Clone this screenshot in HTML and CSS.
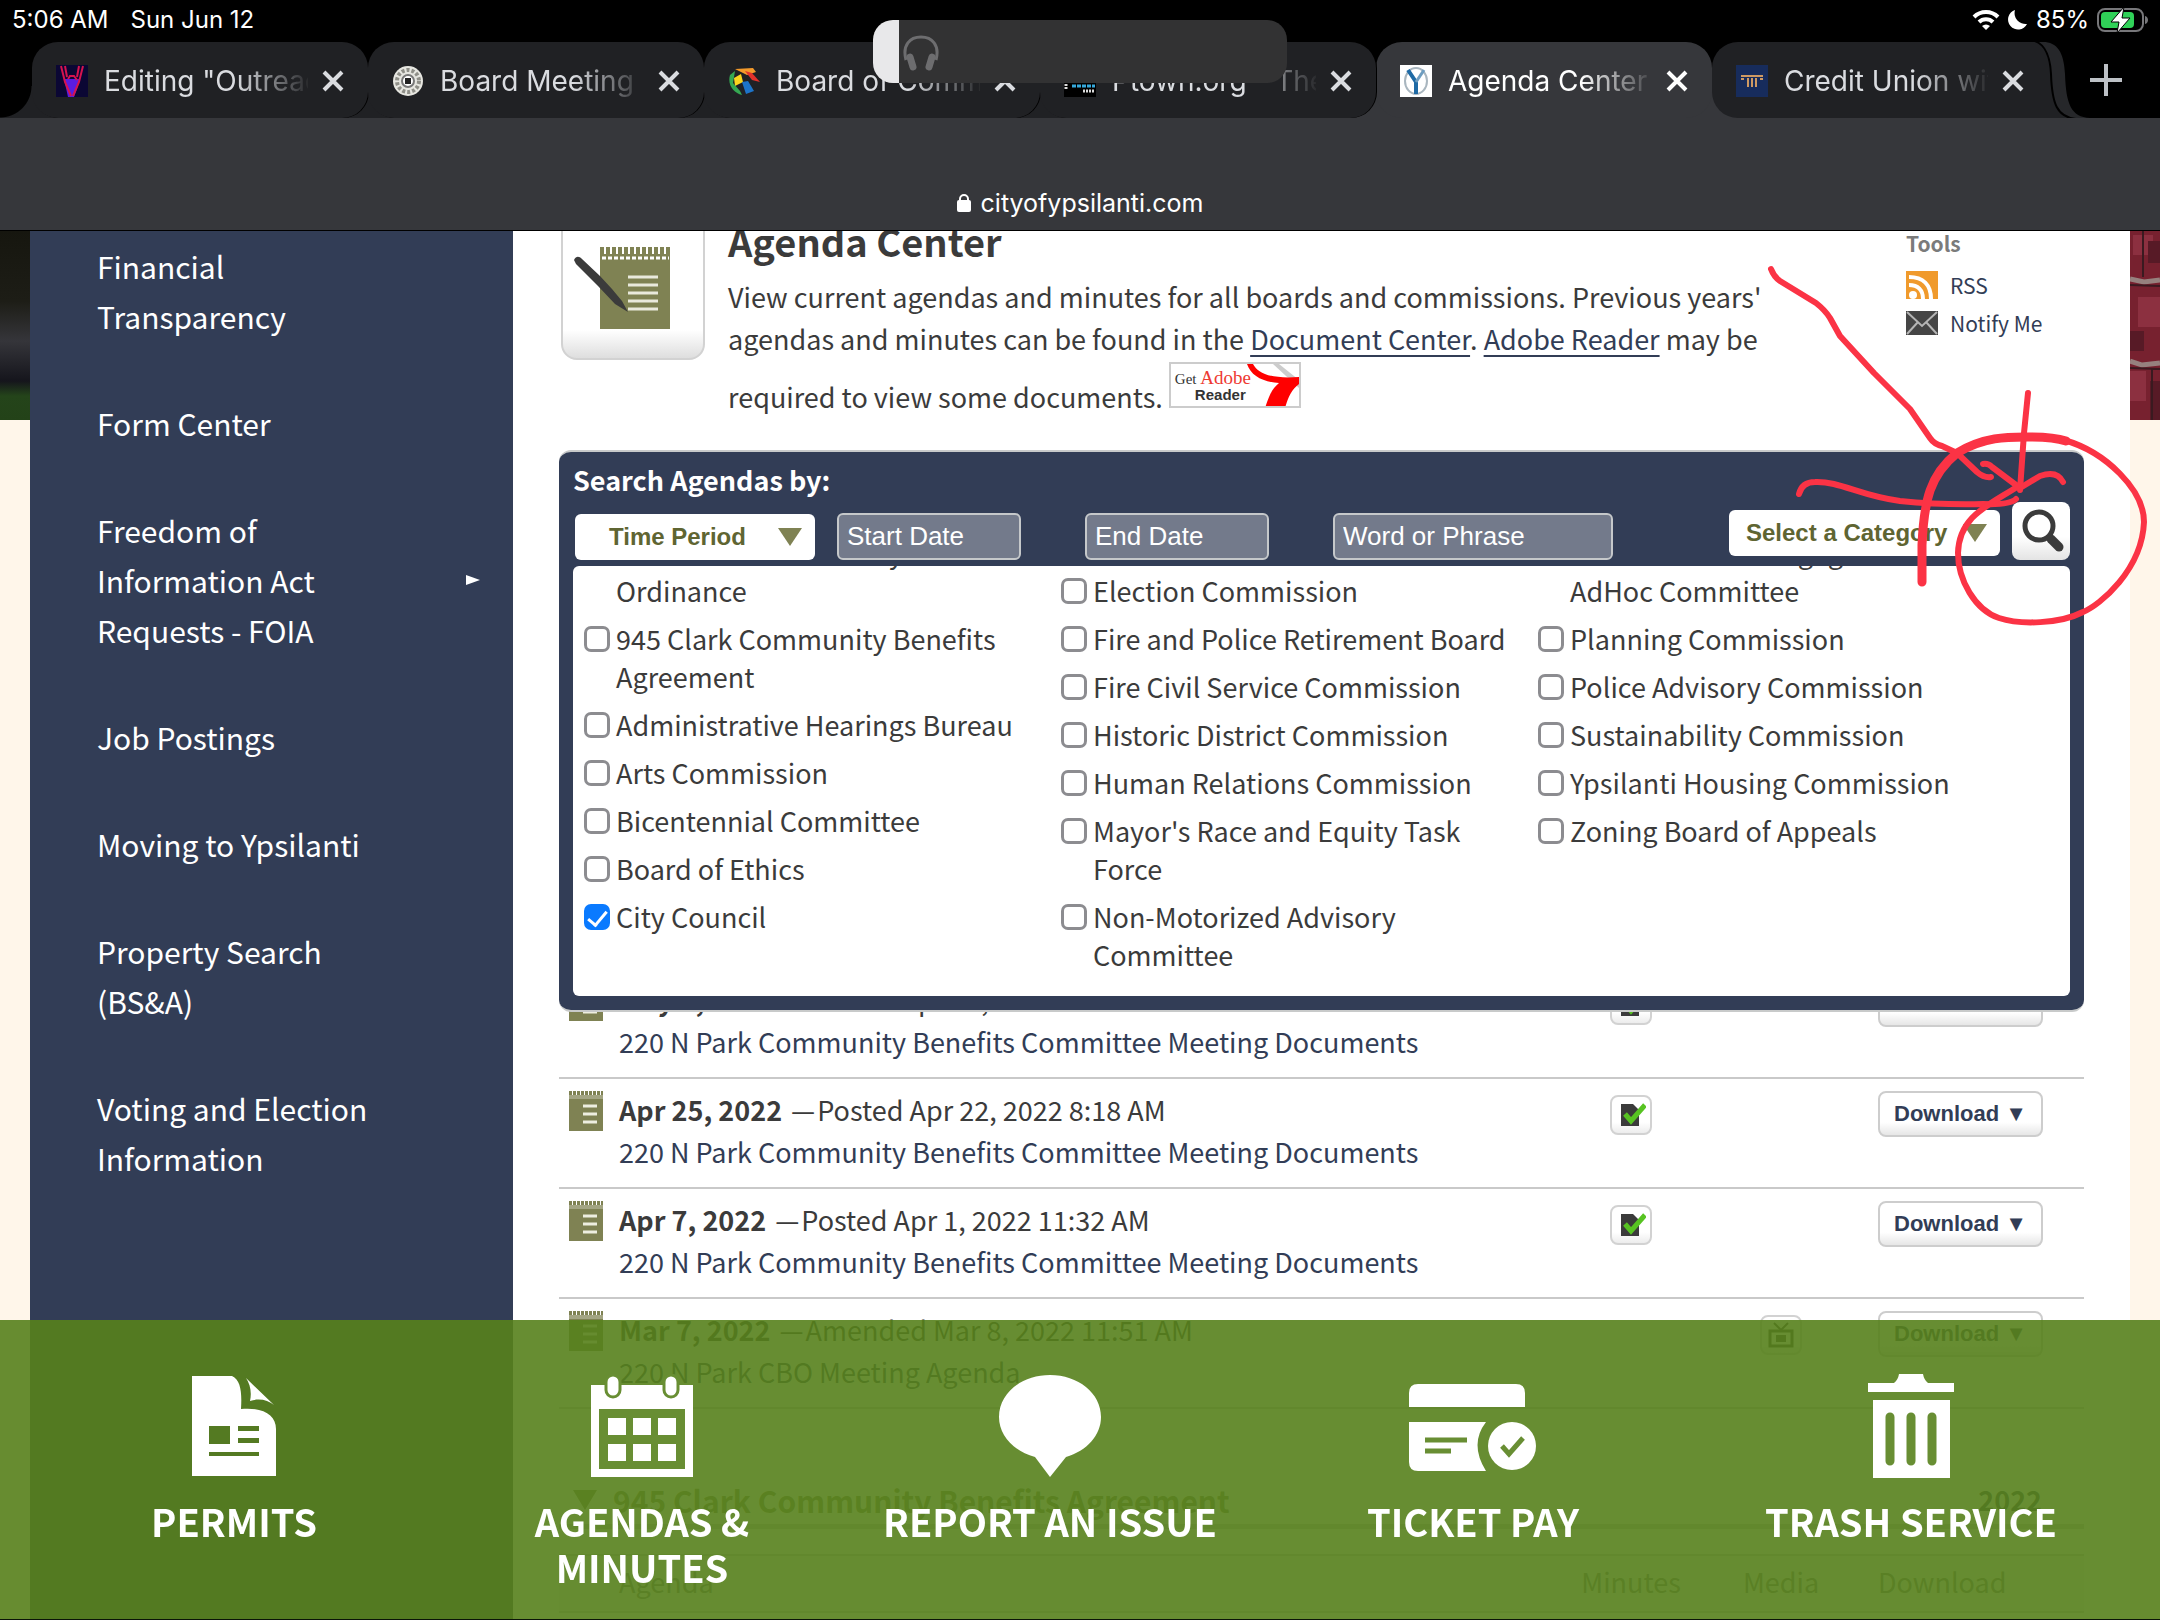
FILE: index.html
```html
<!DOCTYPE html>
<html lang="en">
<head>
    <meta charset="UTF-8">
    <meta name="viewport" content="width=device-width, initial-scale=1.0">
    <title>Agenda Center</title>
    <link rel="stylesheet" href="styles.css">
</head>
<body>
<!-- Shared symbols -->
<svg class="symbols" aria-hidden="true">
    <symbol id="close" viewBox="0 0 22 22"><path d="M2 2l18 18M20 2L2 20" stroke="currentColor" stroke-width="4" fill="none"/></symbol>
    <symbol id="notepad" viewBox="0 0 34 40">
        <path fill="#7f8253" d="M0 4h34v36H0z"/>
        <path stroke="#7f8253" stroke-width="4" stroke-dasharray="3 1" d="M0 2h34"/>
        <path fill="#a3a583" d="M0 4h34v4H0z"/>
        <path stroke="#eeeee0" stroke-width="3" d="M14 15h14M14 23h14M14 31h14"/>
    </symbol>
    <symbol id="minutes" viewBox="0 0 30 26">
        <path fill="#3b3b3b" d="M5 2h12l6 6v16H5z"/>
        <path fill="none" stroke="#57c322" stroke-width="5" d="M9 12l6 7L29 3"/>
    </symbol>
    <symbol id="media" viewBox="0 0 26 26">
        <path fill="none" stroke="#3b3b3b" stroke-width="2" d="M6 1l7 7 7-7"/>
        <path fill="none" stroke="#3b3b3b" stroke-width="3" d="M2 9h22v15H2z"/>
        <path fill="#3b3b3b" d="M8 13h10v7H8z"/>
    </symbol>
</svg>

<header class="browser">
    <div class="status">
        <span>5:06 AM</span>
        <span>Sun Jun 12</span>
        <div class="status-right">
            <svg width="28" height="20" viewBox="0 0 28 20" fill="none" stroke="#fff" stroke-width="4"><path d="M2 7a17 17 0 0 1 24 0M7 12a10 10 0 0 1 14 0"/><path d="M14 20l-4-4a6 6 0 0 1 8 0z" fill="#fff" stroke="none"/></svg>
            <svg width="20" height="20" viewBox="0 0 20 20"><path fill="#fff" d="M7 0a11 11 0 0 0 12 14A10 10 0 1 1 7 0z"/></svg>
            <span>85%</span>
            <svg width="52" height="26" viewBox="0 0 52 26"><rect x="1" y="2" width="45" height="22" rx="7" fill="none" stroke="#77777a" stroke-width="2"/><rect x="4" y="5" width="33" height="16" rx="4" fill="#30d158"/><path d="M48 9c4 1 4 7 0 8z" fill="#77777a"/><path d="M27 0L14 15h8l-2 11 13-15h-8z" fill="#fff" stroke="#000" stroke-width="1"/></svg>
        </div>
    </div>
    <div class="tab-bar">
        <ul class="tabs">
            <li><div class="tab">
                <svg class="favicon" viewBox="0 0 32 32"><path fill="#0b0734" d="M0 0h32v32H0z"/><path fill="#5a1de0" d="M8 14h16l-3 10-3 8h-6z"/><path fill="none" stroke="#d6134f" stroke-width="2" d="M5 1l4 16 6 14M9 1l2 11M27 1l-4 16-6 14M23 1l-2 11M12 14l2-3 4 0 3 4"/></svg>
                <span class="tab-title">Editing "Outreach"</span>
                <button type="button" aria-label="Close tab"><svg><use href="#close"/></svg></button>
            </div></li>
            <li><div class="tab">
                <svg class="favicon" viewBox="0 0 32 32"><circle cx="16" cy="16" r="15" fill="#e6e6e0"/><circle cx="16" cy="16" r="11" fill="none" stroke="#8f8f88" stroke-width="4" stroke-dasharray="3 2"/><circle cx="16" cy="16" r="6" fill="#fff" stroke="#777" stroke-width="2"/><path fill="#222" d="M13 13h6v6h-6z"/></svg>
                <span class="tab-title">Board Meeting</span>
                <button type="button" aria-label="Close tab"><svg><use href="#close"/></svg></button>
            </div></li>
            <li><div class="tab">
                <svg class="favicon" viewBox="0 0 32 32"><path fill="#f39a2b" d="M7 4l18-1 3 4-9 3z"/><path fill="#e2322b" d="M17 6l7 2 8 9-8-2z"/><path fill="#fbd51e" d="M6 13l7-4 2 8-8 4z"/><path fill="#35a852" d="M2 10l5-4-2 12 7 8 2 4C6 28-1 20 2 10z"/><path fill="#1d74c9" d="M14 17l6-1 6 10-8 3z"/></svg>
                <span class="tab-title">Board of Commissioners</span>
                <button type="button" aria-label="Close tab"><svg><use href="#close"/></svg></button>
            </div></li>
            <li><div class="tab">
                <svg class="favicon" viewBox="0 0 32 32"><path d="M0 0h32v32H0z"/><path stroke="#36a9dc" stroke-width="3" stroke-dasharray="4 1" d="M8 21h23"/><path stroke="#ddd" stroke-width="3" stroke-dasharray="2 1" d="M19 26h12M2 16v9"/></svg>
                <span class="tab-title">Ptown.org - The Home</span>
                <button type="button" aria-label="Close tab"><svg><use href="#close"/></svg></button>
            </div></li>
            <li class="active"><div class="tab">
                <svg class="favicon" viewBox="0 0 32 32"><path fill="#fff" d="M0 0h32v32H0z"/><ellipse cx="16" cy="16" rx="11" ry="13" fill="none" stroke="#a9b6bf" stroke-width="2"/><path fill="none" stroke="#1f6aa5" stroke-width="4" d="M8 5l8 12v12"/><path stroke="#6e9dc0" stroke-width="3" d="M24 5l-8 12"/></svg>
                <span class="tab-title">Agenda Center</span>
                <button type="button" aria-label="Close tab"><svg><use href="#close"/></svg></button>
            </div></li>
            <li><div class="tab">
                <svg class="favicon" viewBox="0 0 32 32"><path fill="#172c5c" d="M0 0h32v32H0z"/><path fill="none" stroke="#cf9a63" stroke-width="2" d="M5 11h22M12 13v9M16 13v9M20 13v9M5 14h3M24 14h3"/></svg>
                <span class="tab-title">Credit Union with</span>
                <button type="button" aria-label="Close tab"><svg><use href="#close"/></svg></button>
            </div></li>
        </ul>
        <div class="new-tab">
            <svg class="tab-edge" width="100" height="76" viewBox="0 0 100 76"><path fill="#26272a" d="M0 0h53c14 0 21 10 22 32 1 30 6 43 25 44H0z"/><path fill="#202124" stroke="#000" stroke-width="2" d="M0-2h38c14 0 22 12 23 34 1 30 6 43 25 45H0z"/></svg>
            <button type="button" aria-label="New tab"><svg width="32" height="32" viewBox="0 0 32 32"><path stroke="#bdc1c6" stroke-width="4" d="M16 0v32M0 16h32"/></svg></button>
        </div>
    </div>
    <div class="address">
        <svg width="14" height="18" viewBox="0 0 14 18"><rect y="6" width="14" height="12" rx="2" fill="#fff"/><path d="M3 8V5a4 4 0 0 1 8 0v3" fill="none" stroke="#fff" stroke-width="2"/></svg>
        <span>cityofypsilanti.com</span>
    </div>
    <!-- Volume overlay -->
    <div class="volume">
        <svg width="36" height="36" viewBox="0 0 36 36" fill="none" stroke="#6d6d6f" stroke-width="3"><path d="M3 25C-1 10 7 2 18 2s19 8 15 23"/><path d="M7 22l3 10M29 22l-3 10" stroke-width="7" stroke-linecap="round"/></svg>
    </div>
</header>

<div class="page">
    <div class="banner">
        <div class="banner-left"></div>
        <svg class="banner-right" viewBox="0 0 30 189" preserveAspectRatio="none">
            <path fill="#77212f" d="M0 0h30v189H0z"/>
            <path fill="#8c3040" d="M3 4h20v20H3zM8 66h22v30H8zM0 140h16v30H0z"/>
            <path fill="#571a26" d="M18 10h12v22H18zM0 100h14v20H0zM20 150h10v39H20z"/>
            <path fill="none" stroke="#96817e" stroke-width="5" d="M0 48l14 3 16-2M0 130l12 4 18-2"/>
            <path fill="none" stroke="#3a1a20" stroke-width="2" d="M0 54l30 1M0 137l30 1M22 137v52M13 0v46"/>
        </svg>
    </div>

    <nav class="sidebar">
        <ul>
            <li><a href="#">Financial Transparency</a></li>
            <li><a href="#">Form Center</a></li>
            <li><a href="#">Freedom of Information Act Requests - FOIA</a><span class="more"></span></li>
            <li><a href="#">Job Postings</a></li>
            <li><a href="#">Moving to Ypsilanti</a></li>
            <li><a href="#">Property Search (BS&amp;A)</a></li>
            <li><a href="#">Voting and Election Information</a></li>
        </ul>
    </nav>

    <main>
        <section class="intro">
            <div class="intro-icon">
                <svg width="100" height="84" viewBox="0 0 100 84">
                    <path fill="#7f8253" d="M28 8h70v75H28z"/>
                    <path stroke="#7f8253" stroke-width="8" stroke-dasharray="4 2" d="M28 5h70"/>
                    <path stroke="#fff" stroke-width="3" stroke-dasharray="4 2" d="M30 12h67"/>
                    <path stroke="#e9e9dc" stroke-width="3" d="M56 31h30M56 39h30M56 47h30M56 55h30M56 63h30"/>
                    <path fill="#3b3b3b" d="M2 14c2-4 5-4 8-1l18 17 12 13 10 12 6 11-13-8-17-18L4 18z"/>
                </svg>
            </div>
            <div class="intro-text">
                <h1>Agenda Center</h1>
                <p>View current agendas and minutes for all boards and commissions. Previous years' agendas and minutes can be found in the <a href="#">Document Center</a>. <a href="#">Adobe Reader</a> may be required to view some documents. <a class="reader" href="#"><span>Get</span> <b>Adobe</b><strong>Reader</strong><svg width="52" height="44" viewBox="0 0 52 44"><path fill="#ccc" d="M26 0h6l20 16v8z"/><path fill="#f00" d="M18 44c5-15 8-20 14-25C16 18 4 12 0 0h6c5 9 16 15 46 13v7c-8 6-11 14-14 24z"/></svg></a></p>
            </div>
            <aside class="tools">
                <h2>Tools</h2>
                <a href="#"><svg width="32" height="28" viewBox="0 0 32 28"><path fill="#f09a2c" d="M0 0h32v28H0z"/><circle cx="7" cy="24" r="4" fill="#fff"/><path fill="none" stroke="#fff" stroke-width="4" d="M3 14c9 0 14 5 14 14M3 6c14 0 22 8 22 22"/></svg>RSS</a>
                <a href="#"><svg width="32" height="24" viewBox="0 0 32 24"><path fill="#454545" d="M0 0h32v24H0z"/><path fill="none" stroke="#b5b5b5" stroke-width="2" d="M1 1l15 14L31 1M1 23l11-12M31 23L20 11"/></svg>Notify Me</a>
            </aside>
        </section>

        <form class="search">
            <h2>Search Agendas by:</h2>
            <div class="controls">
                <button type="button" class="picker period">Time Period <i></i></button>
                <input type="text" aria-label="Start Date" placeholder="Start Date">
                <input type="text" aria-label="End Date" placeholder="End Date">
                <input type="text" class="phrase" aria-label="Word or Phrase" placeholder="Word or Phrase">
                <button type="button" class="picker category">Select a Category <i></i></button>
                <button type="submit" class="go" aria-label="Search"><svg width="46" height="46" viewBox="0 0 46 46"><circle cx="21" cy="18" r="14" fill="none" stroke="#3b3b3b" stroke-width="5"/><path stroke="#3b3b3b" stroke-width="9" stroke-linecap="round" d="M33 31l8 8"/></svg></button>
            </div>
            <div class="categories">
                <ul>
                    <li class="cut"><label>220 N Park Community Benefits Ordinance</label></li>
                    <li><input type="checkbox" id="c1"><label for="c1">945 Clark Community Benefits Agreement</label></li>
                    <li><input type="checkbox" id="c2"><label for="c2">Administrative Hearings Bureau</label></li>
                    <li><input type="checkbox" id="c3"><label for="c3">Arts Commission</label></li>
                    <li><input type="checkbox" id="c4"><label for="c4">Bicentennial Committee</label></li>
                    <li><input type="checkbox" id="c5"><label for="c5">Board of Ethics</label></li>
                    <li><input type="checkbox" id="c6" checked><label for="c6">City Council</label></li>
                </ul>
                <ul class="second">
                    <li><input type="checkbox" id="c7"><label for="c7">Election Commission</label></li>
                    <li><input type="checkbox" id="c8"><label for="c8">Fire and Police Retirement Board</label></li>
                    <li><input type="checkbox" id="c9"><label for="c9">Fire Civil Service Commission</label></li>
                    <li><input type="checkbox" id="c10"><label for="c10">Historic District Commission</label></li>
                    <li><input type="checkbox" id="c11"><label for="c11">Human Relations Commission</label></li>
                    <li><input type="checkbox" id="c12"><label for="c12">Mayor's Race and Equity Task Force</label></li>
                    <li><input type="checkbox" id="c13"><label for="c13">Non-Motorized Advisory Committee</label></li>
                </ul>
                <ul>
                    <li class="cut"><label>Parks and Civic Engagement AdHoc Committee</label></li>
                    <li><input type="checkbox" id="c14"><label for="c14">Planning Commission</label></li>
                    <li><input type="checkbox" id="c15"><label for="c15">Police Advisory Commission</label></li>
                    <li><input type="checkbox" id="c16"><label for="c16">Sustainability Commission</label></li>
                    <li><input type="checkbox" id="c17"><label for="c17">Ypsilanti Housing Commission</label></li>
                    <li><input type="checkbox" id="c18"><label for="c18">Zoning Board of Appeals</label></li>
                </ul>
            </div>
        </form>

        <table class="agendas">
            <tbody>
            <tr>
                <td><div class="item"><svg class="pad"><use href="#notepad"/></svg><div><strong>May 2, 2022</strong><span class="dash">—</span>Posted Apr 29, 2022 8:08 AM<br><a href="#">220 N Park Community Benefits Committee Meeting Documents</a></div></div></td>
                <td class="minutes"><a class="chip" href="#" aria-label="Minutes"><svg><use href="#minutes"/></svg></a></td>
                <td class="media"></td>
                <td class="download"><button type="button">Download ▼</button></td>
            </tr>
            <tr>
                <td><div class="item"><svg class="pad"><use href="#notepad"/></svg><div><strong>Apr 25, 2022</strong><span class="dash">—</span>Posted Apr 22, 2022 8:18 AM<br><a href="#">220 N Park Community Benefits Committee Meeting Documents</a></div></div></td>
                <td class="minutes"><a class="chip" href="#" aria-label="Minutes"><svg><use href="#minutes"/></svg></a></td>
                <td class="media"></td>
                <td class="download"><button type="button">Download ▼</button></td>
            </tr>
            <tr>
                <td><div class="item"><svg class="pad"><use href="#notepad"/></svg><div><strong>Apr 7, 2022</strong><span class="dash">—</span>Posted Apr 1, 2022 11:32 AM<br><a href="#">220 N Park Community Benefits Committee Meeting Documents</a></div></div></td>
                <td class="minutes"><a class="chip" href="#" aria-label="Minutes"><svg><use href="#minutes"/></svg></a></td>
                <td class="media"></td>
                <td class="download"><button type="button">Download ▼</button></td>
            </tr>
            <tr>
                <td><div class="item"><svg class="pad"><use href="#notepad"/></svg><div><strong>Mar 7, 2022</strong><span class="dash">—</span>Amended Mar 8, 2022 11:51 AM<br><a href="#">220 N Park CBO Meeting Agenda</a></div></div></td>
                <td class="minutes"></td>
                <td class="media"><a class="chip" href="#" aria-label="Media"><svg><use href="#media"/></svg></a></td>
                <td class="download"><button type="button">Download ▼</button></td>
            </tr>
            </tbody>
        </table>

        <div class="group">
            <i></i>
            <h2>945 Clark Community Benefits Agreement</h2>
            <a href="#">2022</a>
        </div>
        <table class="agendas next">
            <thead>
            <tr>
                <th>Agenda</th>
                <th class="minutes">Minutes</th>
                <th class="media">Media</th>
                <th class="download">Download</th>
            </tr>
            </thead>
        </table>
    </main>

    <!-- Hand-drawn arrows and circle around the search button -->
    <svg class="markup" width="400" height="380" viewBox="1760 260 400 380" fill="none" stroke="#fb3345" stroke-width="6" stroke-linecap="round" stroke-linejoin="round">
        <path d="M1771 269Q1774 277 1780 281L1816 303Q1825 310 1830 318L1840 336L1874 373L1910 409L1930 438Q1934 444 1942 446L1957 453L1977 472Q1984 478 1991 477"/>
        <path d="M2028 393L2024 433L2020 490"/>
        <path d="M1983 464Q1988 463 1992 467L2020 488L2040 476Q2057 470 2063 482"/>
        <path d="M1799 494Q1802 482 1815 482C1840 481 1860 496 1900 501Q1940 505 1983 504Q2010 505 2016 499" />
        <path d="M1922 582V545C1924 500 1930 475 1957 453C1985 436 2010 437 2030 437Q2054 437 2066 441" stroke-width="9"/>
        <path d="M2064 440C2106 452 2144 490 2144 522C2142 570 2100 605 2083 612C2060 624 2020 625 1999 618C1975 610 1958 580 1958 553C1959 515 1990 505 2020 485"/>
    </svg>
</div>

<footer class="quick-links">
    <a href="#">
        <svg width="84" height="100" viewBox="0 0 84 100"><path fill="#fff" d="M0 0h40c9 4 10 17 9 33 22-2 35 6 35 20v47H0z"/><path fill="#fff" d="M54 2l28 27c-6-5-15-7-24-4 2-9 0-17-4-23z"/><path fill="#547a22" d="M17 50h21v18H17zM46 50h21v5H46zM46 62h21v5H46zM17 76h50v4H17z"/></svg>
        <span>PERMITS</span>
    </a>
    <a href="#">
        <svg width="102" height="102" viewBox="0 0 102 102"><path fill="#fff" d="M0 10h102v92H0z"/><g fill="#fff" stroke="#688e33" stroke-width="3"><rect x="15" y="0" width="14" height="22" rx="7"/><rect x="73" y="0" width="14" height="22" rx="7"/></g><path fill="#688e33" d="M8 34h86v60H8z"/><path fill="#fff" d="M17 43h18v17H17zM42 43h18v17H42zM67 43h18v17H67zM17 69h18v17H17zM42 69h18v17H42zM67 69h18v17H67z"/></svg>
        <span>AGENDAS &amp; MINUTES</span>
    </a>
    <a href="#">
        <svg width="102" height="102" viewBox="0 0 102 102"><path fill="#fff" d="M51 0c28 0 51 18 51 42 0 18-14 34-35 40L51 102 36 82C14 76 0 60 0 42 0 18 23 0 51 0z"/></svg>
        <span>REPORT AN ISSUE</span>
    </a>
    <a href="#">
        <svg width="128" height="100" viewBox="0 0 128 100"><path fill="#fff" d="M0 31V17Q0 8 9 8h98q9 0 9 9v14zM0 46h77q-17 22 0 49H9q-9 0-9-9z"/><circle cx="103" cy="70" r="24" fill="#fff"/><path fill="none" stroke="#688e33" stroke-width="5" d="M16 64h42M16 75h26M93 70l7 8 14-16"/></svg>
        <span>TICKET PAY</span>
    </a>
    <a href="#">
        <svg width="86" height="104" viewBox="0 0 86 104"><path fill="#fff" d="M0 9h26q4-3 5-9h24q1 6 5 9h26v9H0zM5 26h77v78H5z"/><path stroke="#688e33" stroke-width="9" stroke-linecap="round" d="M22 43v44M43 43v44M64 43v44"/></svg>
        <span>TRASH SERVICE</span>
    </a>
</footer>
</body>
</html>
```
FILE: styles.css
```css
/* General Styles */
* {
    box-sizing: border-box;
}

body {
    display: flex;
    flex-direction: column;
    height: 100vh;
    margin: 0;
    overflow: hidden;
    background-color: #fff6ea;
    color: #3b3b3b;
    font-family: "Noto Sans CJK SC", "Noto Sans", sans-serif;
    font-size: 27px;
    line-height: 42px;
}

h1, h2, p, ul {
    margin: 0;
    padding: 0;
}

ul {
    list-style: none;
}

svg {
    display: block;
    flex-shrink: 0;
}

button, input {
    margin: 0;
    padding: 0;
    border: none;
    background: none;
    color: inherit;
    font-family: "Liberation Sans", Arial, sans-serif;
}

a {
    color: #323d56;
    text-decoration: none;
}

.symbols {
    position: absolute;
    width: 0;
    height: 0;
}

/* Browser Styles */
.browser {
    position: relative;
    z-index: 5;
    flex-shrink: 0;
    background-color: #36373b;
    border-bottom: 1px solid #000;
    color: #fff;
    font-family: Inter, Roboto, sans-serif;
}

.status {
    display: flex;
    align-items: center;
    gap: 22px;
    height: 42px;
    padding: 0 11px 2px 12px;
    background-color: #000;
    font-size: 24px;
}

.status-right {
    display: flex;
    align-items: center;
    gap: 8px;
    margin-left: auto;
}

.tab-bar {
    display: flex;
    height: 76px;
    padding-left: 32px;
    background-color: #000;
}

.tabs {
    display: flex;
    flex: 1;
    min-width: 0;
    background: linear-gradient(#000 50%, #202124 50%);
}

.tabs li {
    position: relative;
    flex: 1;
    min-width: 0;
}

.tabs li:first-child::before {
    content: "";
    position: absolute;
    left: -32px;
    bottom: 0;
    width: 32px;
    height: 32px;
    background: radial-gradient(circle at 0 0, #000 31px, #202124 32px);
}

.tabs .active::before {
    content: "";
    position: absolute;
    left: -28px;
    right: -28px;
    bottom: 0;
    height: 38px;
    background-color: #36373b;
}

.tab {
    position: relative;
    z-index: 1;
    display: flex;
    align-items: center;
    height: 76px;
    padding: 2px 24px 0;
    border-radius: 26px;
    background-color: #202124;
    box-shadow: 1px 0 0 #000;
    color: #dadce0;
}

.active .tab {
    z-index: 0;
    background-color: #36373b;
    box-shadow: none;
    color: #fff;
}

.favicon {
    width: 32px;
    height: 32px;
}

.tab-title {
    flex: 1;
    margin: 0 14px 0 16px;
    overflow: hidden;
    white-space: nowrap;
    font-size: 28px;
    -webkit-mask-image: linear-gradient(to right, #000 65%, transparent 102%);
    mask-image: linear-gradient(to right, #000 65%, transparent 102%);
}

.tab button svg {
    width: 22px;
    height: 22px;
}

.new-tab {
    position: relative;
    display: flex;
    flex-shrink: 0;
    align-items: center;
    justify-content: flex-end;
    width: 112px;
    padding-right: 38px;
}

.tab-edge {
    position: absolute;
    left: -58px;
    top: 0;
}

.tabs li:last-child {
    z-index: 1;
}

.tabs li:last-child .tab {
    z-index: 2;
    background: none;
    box-shadow: none;
}

.tabs li:last-child::before {
    content: "";
    position: absolute;
    z-index: 1;
    inset: 0 50px 0 0;
    border-radius: 26px 0 0 26px;
    background-color: #202124;
}

.address {
    display: flex;
    align-items: flex-end;
    justify-content: center;
    gap: 10px;
    height: 112px;
    padding-bottom: 6px;
    font-size: 25px;
}

.address svg {
    margin-bottom: 12px;
}

.volume {
    position: absolute;
    z-index: 3;
    top: 20px;
    left: calc(50% - 207px);
    width: 414px;
    height: 63px;
    padding: 15px 0 0 30px;
    border-radius: 20px;
    background: linear-gradient(to right, #e8e8ea 26px, #323233 26px);
}

/* Page Styles */
.page {
    position: relative;
    display: flex;
    flex: 1;
    min-height: 0;
    padding: 0 30px;
    overflow: hidden;
}

.banner {
    position: absolute;
    top: 0;
    left: 0;
    right: 0;
    display: flex;
    justify-content: space-between;
    height: 189px;
}

.banner-left {
    width: 30px;
    background: linear-gradient(#16160f 0, #1d1d16 70px, #35353a 110px, #15151c 150px, #24441a 165px, #234218 100%);
}

.banner-right {
    width: 30px;
    height: 189px;
}

.sidebar {
    position: relative;
    flex: 0 0 23%;
    padding-top: 10px;
    background-color: #323d56;
}

.sidebar li {
    display: flex;
    align-items: center;
    justify-content: space-between;
    margin-bottom: 57px;
    padding: 0 33px 0 67px;
    font-size: 30px;
    line-height: 50px;
}

.sidebar a {
    max-width: 280px;
    color: #fff;
}

.more {
    border: 5px solid transparent;
    border-left: 14px solid #fff;
    border-right: none;
}

main {
    position: relative;
    flex: 1;
    min-width: 0;
    padding: 0 46px;
    background-color: #fff;
}

/* Intro Styles */
.intro {
    display: flex;
    height: 234px;
    margin-top: -15px;
    padding-left: 2px;
}

.intro-icon {
    display: flex;
    align-items: center;
    justify-content: center;
    width: 144px;
    height: 144px;
    padding-right: 22px;
    border: 2px solid #d2d2d2;
    border-radius: 16px;
    background: linear-gradient(#fff 80%, #dedede);
}

.intro-text {
    width: 1060px;
    margin-left: 23px;
    padding-top: 4px;
}

.intro-text h1 {
    margin-bottom: 14px;
    font-size: 38px;
    line-height: 42px;
}

.intro-text a {
    text-decoration: underline;
    text-decoration-thickness: 2px;
    text-underline-offset: 5px;
}

.intro-text .reader {
    position: relative;
    display: inline-block;
    width: 132px;
    height: 46px;
    margin-top: 2px;
    overflow: hidden;
    padding: 6px 4px;
    border: 2px solid #ccc;
    color: #333;
    font-family: "Liberation Serif", serif;
    font-size: 15px;
    line-height: 16px;
    text-decoration: none;
    vertical-align: baseline;
}

.reader b {
    color: #ee3a32;
    font-size: 19px;
    font-weight: normal;
}

.reader strong {
    display: block;
    padding-left: 20px;
    font-family: "Liberation Sans", sans-serif;
    font-size: 15px;
}

.reader svg {
    position: absolute;
    top: 0;
    right: 0;
}

.tools {
    margin-left: auto;
    width: 178px;
    padding-top: 10px;
    font-size: 21px;
    line-height: 38px;
}

.tools h2 {
    margin-bottom: 6px;
    color: #7b7b7b;
    font-size: 21px;
    line-height: 34px;
}

.tools a {
    display: flex;
    align-items: center;
    gap: 12px;
}

/* Search Styles */
.search {
    position: relative;
    z-index: 1;
    padding: 8px 14px 14px;
    border: solid #c8caca;
    border-width: 2px 0;
    border-radius: 12px;
    background-color: #323d56;
}

.search h2 {
    margin-bottom: 2px;
    color: #fff;
    font-size: 27px;
    line-height: 40px;
}

.controls {
    display: flex;
    align-items: flex-end;
    padding-left: 2px;
}

.controls input {
    width: 184px;
    height: 47px;
    margin-right: 64px;
    padding: 0 8px;
    border: 2px solid #c5c8ca;
    border-radius: 6px;
    background-color: #737a8b;
    color: #fff;
    font-size: 26px;
}

.controls input::placeholder {
    color: #fff;
    opacity: 1;
}

.controls .phrase {
    width: 280px;
    margin-right: auto;
}

.picker {
    display: flex;
    align-items: center;
    justify-content: space-between;
    height: 46px;
    border-radius: 6px;
    background-color: #fff;
    color: #5f6532;
    font-size: 24px;
    font-weight: bold;
}

.picker i {
    border: 12px solid transparent;
    border-top: 18px solid #7f8253;
    border-bottom: none;
}

.period {
    width: 240px;
    margin-right: 22px;
    padding: 0 13px 0 34px;
}

.category {
    width: 271px;
    margin: 0 12px 4px 0;
    padding: 0 13px 0 17px;
}

.go {
    display: flex;
    align-items: center;
    justify-content: center;
    width: 58px;
    height: 58px;
    border-radius: 8px;
    background: linear-gradient(#fff 60%, #e4e4e4);
}

.categories {
    display: grid;
    grid-template-columns: repeat(3, 1fr);
    height: 430px;
    margin-top: 6px;
    padding: 0 55px 0 11px;
    overflow: hidden;
    border-radius: 6px;
    background-color: #fff;
    line-height: 38px;
}

.categories ul {
    margin-top: -32px;
}

.categories .second {
    padding-top: 38px;
}

.categories li {
    display: flex;
    gap: 6px;
    margin-bottom: 10px;
    padding-right: 20px;
}

.categories .cut {
    padding-left: 32px;
}

.categories input {
    flex-shrink: 0;
    appearance: none;
    width: 26px;
    height: 26px;
    margin-top: 6px;
    border: 3px solid #8c8c90;
    border-radius: 7px;
    background-color: #fff;
}

.categories input:checked {
    display: flex;
    justify-content: center;
    border-color: #0a7aff;
    background-color: #0a7aff;
}

.categories input:checked::before {
    content: "";
    width: 8px;
    height: 16px;
    border: solid #fff;
    border-width: 0 3px 3px 0;
    transform: rotate(40deg);
}

/* Agenda List Styles */
.agendas {
    width: 100%;
    margin-top: -43px;
    border-collapse: separate;
    border-spacing: 0;
}

.agendas td {
    padding: 10px 0 14px;
    border-bottom: 2px solid #c9c9c9;
    vertical-align: top;
}

.item {
    display: flex;
    gap: 16px;
    padding-left: 10px;
}

.pad {
    width: 34px;
    height: 40px;
    margin-top: 2px;
}

.dash {
    margin: 0 2px 0 9px;
}

.agendas .minutes, .agendas .media {
    width: 150px;
    text-align: center;
}

.agendas .download {
    width: 228px;
    padding-left: 22px;
}

.chip {
    display: flex;
    align-items: center;
    justify-content: center;
    width: 42px;
    height: 40px;
    margin: 6px auto 0;
    border: 2px solid #d2d2d2;
    border-radius: 8px;
    background: linear-gradient(#fff 70%, #ececec);
}

.chip svg {
    width: 30px;
    height: 26px;
}

.download button {
    display: block;
    width: 165px;
    height: 46px;
    margin-top: 2px;
    border: 2px solid #cdcdcd;
    border-radius: 8px;
    background: linear-gradient(#fff 70%, #e6e6e6);
    color: #323d56;
    font-size: 22px;
    font-weight: bold;
}

.group {
    display: flex;
    align-items: center;
    margin-top: 70px;
    padding: 0 42px 3px 14px;
    border-bottom: 5px solid #c9c9c9;
}

.group i {
    margin-right: 16px;
    border: 12px solid transparent;
    border-top: 20px solid #7f8253;
    border-bottom: none;
}

.group h2 {
    flex: 1;
    color: #7f8253;
    font-size: 30px;
}

.group a {
    font-weight: bold;
}

.next {
    margin-top: 25px;
    background-color: #f2f2f2;
}

.next th {
    padding: 5px 0 8px;
    border: solid #c9c9c9;
    border-width: 2px 0;
    color: #777;
    font-weight: normal;
    text-align: left;
}

.next th:first-child {
    padding-left: 60px;
}

.markup {
    position: absolute;
    z-index: 2;
    top: 29px;
    right: 0;
}

/* Quick Links Styles */
.quick-links {
    position: fixed;
    z-index: 4;
    left: 0;
    right: 0;
    bottom: 0;
    display: grid;
    grid-template-columns: 408fr 408fr 408fr 438fr 438fr;
    min-height: 300px;
    padding: 54px 30px 24px;
    border-bottom: 1px solid #0b1408;
    background-color: rgba(87, 129, 28, 0.9);
}

.quick-links a {
    display: flex;
    flex-direction: column;
    align-items: center;
    padding: 0 20px;
    color: #fff;
    font-size: 38px;
    font-weight: bold;
    line-height: 46px;
    text-align: center;
}

.quick-links svg {
    height: 104px;
    margin-bottom: 20px;
}
```
